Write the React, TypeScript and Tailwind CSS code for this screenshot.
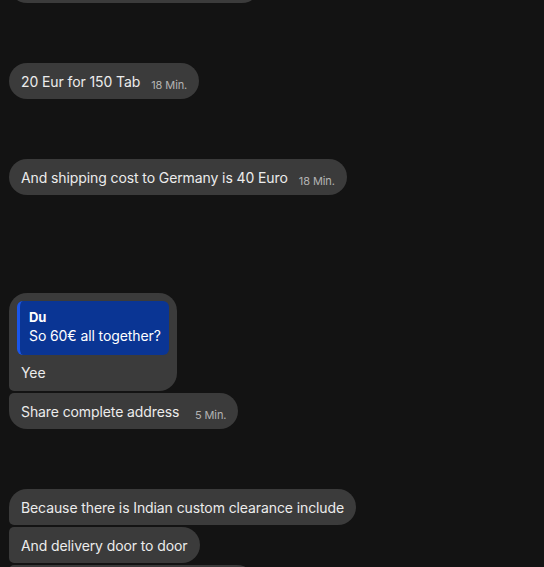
const Time = ({ t }: { t: string }) => (
  <span className="min-w-[47px] translate-y-[2px] text-right text-[11px] leading-none text-[#b3b3b3]">{t}</span>
);

const Bubble = ({
  text,
  time,
  corners,
}: {
  text: string;
  time?: string;
  corners: string;
}) => (
  <div className={`flex h-9 w-fit items-baseline bg-[#3b3b3b] px-3 pb-[7px] pt-[9px] text-[14px] leading-5 tracking-[-0.1px] text-[#ececec] ${corners}`}>
    <span>{text}</span>
    {time && <Time t={time} />}
  </div>
);

export default function App() {
  return (
    <div
      className="h-[567px] w-[544px] overflow-hidden bg-[#131313] pl-[9px]"
      style={{ fontFamily: 'Inter, "Noto Sans", sans-serif' }}
    >
      <div className="-mt-[33px] h-9 w-[251px] rounded-[18px] bg-[#3b3b3b]" />

      <div className="mt-[60px]">
        <Bubble text="20 Eur for 150 Tab" time="18 Min." corners="rounded-[18px]" />
      </div>

      <div className="mt-[60px]">
        <Bubble text="And shipping cost to Germany is 40 Euro" time="18 Min." corners="rounded-[18px]" />
      </div>

      <div className="mt-[98px] flex flex-col gap-[2px]">
        <div className="w-fit rounded-[18px] rounded-bl-[5px] bg-[#3b3b3b] p-2 text-[14px] leading-5 tracking-[-0.1px] text-[#ececec]">
          <div className="h-[54px] rounded-[6px] border-l-[3px] border-[#1a56ea] bg-[#0a3594] pl-[9px] pr-2 pt-[8px]">
            <div className="text-[13px] font-bold leading-[16px] text-white">Du</div>
            <div className="leading-[22px] text-white">So 60€ all together?</div>
          </div>
          <div className="mt-2 px-1">Yee</div>
        </div>
        <Bubble text="Share complete address" time="5 Min." corners="rounded-[18px] rounded-tl-[5px]" />
      </div>

      <div className="mt-[60px] flex flex-col gap-[2px]">
        <Bubble text="Because there is Indian custom clearance include" corners="rounded-[18px] rounded-bl-[5px]" />
        <Bubble text="And delivery door to door" corners="rounded-[18px] rounded-l-[5px]" />
        <div className="h-9 w-[246px] rounded-[18px] rounded-tl-[5px] bg-[#3b3b3b]" />
      </div>
    </div>
  );
}
